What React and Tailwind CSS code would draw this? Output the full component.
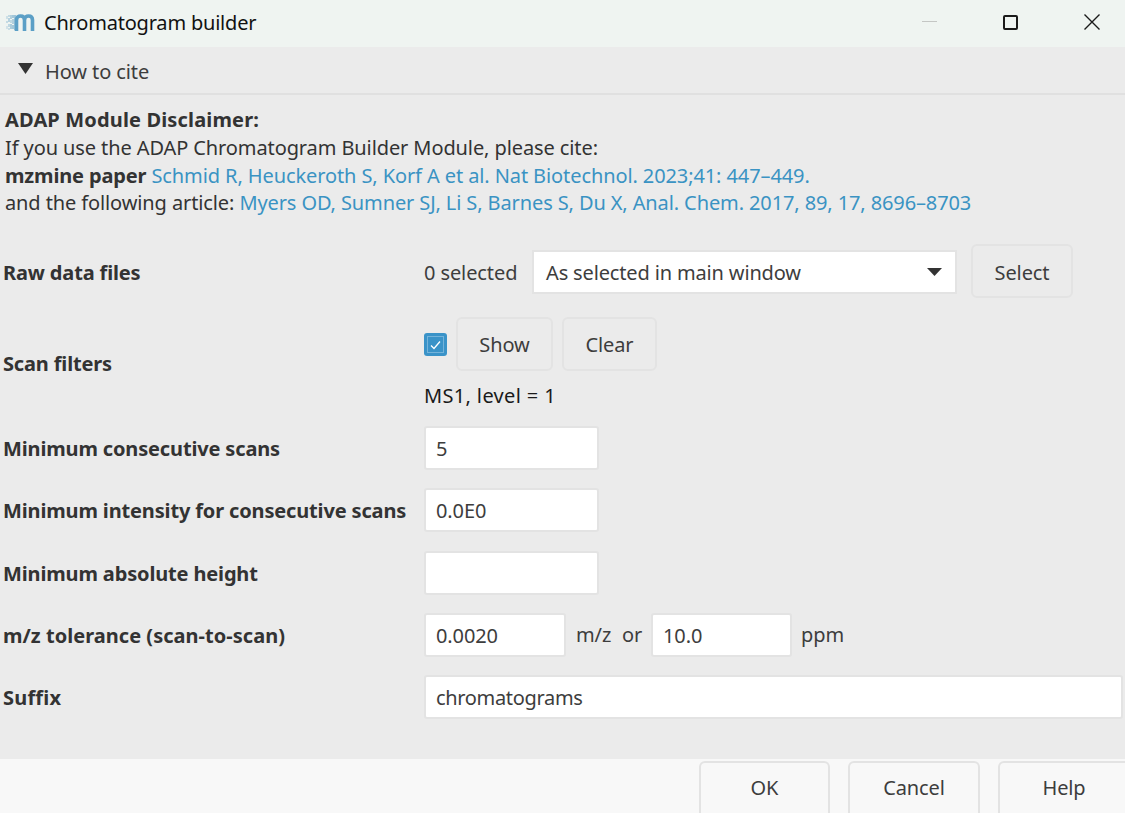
function Btn({ children, className }) {
  return (
    <div className={`flex items-center justify-center shrink-0 border-2 border-[#e3e3e3] rounded-[6px] text-[#3d3d3d] ${className}`}>
      {children}
    </div>
  );
}

function Field({ children, className }) {
  return (
    <div className={`flex items-center shrink-0 pl-[10px] pt-[2px] bg-white border-2 border-[#e3e3e3] rounded-[3px] text-[#3d3d3d] ${className}`}>
      {children}
    </div>
  );
}

function Row({ label, h, labelClass, children }) {
  return (
    <div className={`flex items-center ${h}`}>
      <div className={`w-[424px] pl-[3px] translate-y-px font-bold text-[#333333] shrink-0 whitespace-nowrap ${labelClass || "tracking-[-0.15px]"}`}>{label}</div>
      <div className="flex-1 flex items-center min-w-0">{children}</div>
    </div>
  );
}

const grain = [
  [6, 15, 2, 3, .35], [6, 20, 2, 2, .45], [6, 25, 2, 3, .3],
  [8, 14, 2, 2, .45], [8, 17, 2, 4, .6], [8, 23, 2, 3, .5], [8, 27, 2, 2, .4],
  [10, 14, 2, 4, .65], [10, 19, 2, 3, .5], [10, 23, 2, 5, .7],
  [12, 14, 2, 3, .8], [12, 18, 2, 5, .65], [12, 24, 2, 4, .8], [14, 14, 2, 15, .85],
];

export default function App() {
  return (
    <div className="w-[1125px] h-[813px] overflow-hidden bg-[#ebebeb] flex flex-col text-[20px] leading-[26px] tracking-[-0.1px]" style={{ fontFamily: '"Noto Sans","Open Sans",sans-serif' }}>
      <div className="h-[47px] bg-[#eff4f1] flex items-center shrink-0 pb-[1px]">
        <svg width="29" height="18" viewBox="6 13 29 18" className="ml-[6px] mr-[9px]">
          <g fill="#8fbbd3">
            {grain.map(([x, y, w, h, o], i) => (
              <rect key={i} x={x} y={y} width={w} height={h} opacity={o} />
            ))}
          </g>
          <path d="M16.5 30V19C16.5 16 18.5 15 20.5 15s4 1 4 4V30M24.5 19C24.5 16 26.5 15 28.5 15s4 1 4 4V30" fill="none" stroke="#5b9fc6" strokeWidth="3.6" />
        </svg>
        <span className="text-[#111111] tracking-[-0.2px]">Chromatogram builder</span>
        <div className="ml-auto flex items-center -translate-y-px">
          <div className="w-[15px] h-px bg-[#c4c6c4] mr-[66px] -translate-y-px" />
          <div className="w-[15px] h-[15px] border-2 border-[#1a1a1a] rounded-[2px] mr-[66px]" />
          <svg width="16" height="16" viewBox="0 0 16 16" className="mr-[25px]">
            <path d="M0.5 0.5L15.5 15.5M15.5 0.5L0.5 15.5" stroke="#1a1a1a" strokeWidth="1.4" />
          </svg>
        </div>
      </div>

      <div className="h-[48px] border-b-2 border-[#e0e0e0] flex items-center shrink-0 pl-[18px] pt-[3px] text-[#3d3d3d]">
        <svg width="15" height="11" viewBox="0 0 15 11" className="mr-[13px] -mt-[6px]">
          <path d="M0 0H15L7.5 11Z" fill="#333333" />
        </svg>
        <span className="-ml-px">How to cite</span>
      </div>

      <div className="pl-[5px] pt-[11px] h-[147px] shrink-0 text-[#333333] leading-[27.8px] whitespace-nowrap">
        <div className="font-bold tracking-[0.15px]">ADAP Module Disclaimer:</div>
        <div>If you use the ADAP Chromatogram Builder Module, please cite:</div>
        <div><span className="font-bold tracking-[-0.15px]">mzmine paper</span> <span className="text-[#3a93c3]">Schmid R, Heuckeroth S, Korf A et al. Nat Biotechnol. 2023;41: 447–449.</span></div>
        <div className="tracking-[-0.11px]">and the following article: <span className="text-[#3a93c3]">Myers OD, Sumner SJ, Li S, Barnes S, Du X, Anal. Chem. 2017, 89, 17, 8696–8703</span></div>
      </div>

      <div className="flex-1 flex flex-col">
        <Row label="Raw data files" h="h-[54px] mt-[3px]">
          <span className="text-[#3d3d3d] w-[108px] shrink-0 whitespace-nowrap translate-y-px">0 selected</span>
          <div className="w-[425px] h-[44px] shrink-0 bg-white border-2 border-[#e3e3e3] flex items-center pl-[12px] pr-[13px] text-[#3d3d3d]">
            <span className="translate-y-px tracking-[-0.15px]">As selected in main window</span>
            <svg width="15" height="8" viewBox="0 0 15 8" className="ml-auto"><path d="M0 0H15L7.5 8Z" fill="#333333" /></svg>
          </div>
          <Btn className="w-[102px] h-[54px] ml-[14px] -translate-y-px pt-[4px]">Select</Btn>
        </Row>

        <Row label="Scan filters" h="h-[110px] mt-[9px]">
          <div className="flex flex-col">
            <div className="flex items-center">
              <div className="w-[23px] h-[23px] rounded-[3px] bg-[#3a93c8] flex items-center justify-center">
                <div className="w-[17px] h-[17px] border border-[#74b3da] flex items-center justify-center">
                  <svg width="11" height="10" viewBox="0 0 11 10"><path d="M1 5.5L4 8.5L10 1.5" fill="none" stroke="#ffffff" strokeWidth="1.3" /></svg>
                </div>
              </div>
              <Btn className="w-[97px] h-[54px] ml-[9px] -translate-y-px pt-[2px]">Show</Btn>
              <Btn className="w-[95px] h-[54px] ml-[9px] -translate-y-px pt-[2px]">Clear</Btn>
            </div>
            <div className="text-[#1a1a1a] mt-[11px] tracking-[0.35px]">MS1, level = 1</div>
          </div>
        </Row>

        <Row label="Minimum consecutive scans" h="h-[44px] mt-[8px]">
          <Field className="w-[175px] h-[44px]">5</Field>
        </Row>
        <Row label="Minimum intensity for consecutive scans" h="h-[44px] mt-[18px]">
          <Field className="w-[175px] h-[44px]">0.0E0</Field>
        </Row>
        <Row label="Minimum absolute height" h="h-[44px] mt-[19px]">
          <Field className="w-[175px] h-[44px]" />
        </Row>
        <Row label="m/z tolerance (scan-to-scan)" labelClass="tracking-[0.03px]" h="h-[44px] mt-[18px]">
          <Field className="w-[142px] h-[44px]">0.0020</Field>
          <span className="ml-[10px] text-[#3d3d3d] w-[36px] shrink-0">m/z</span>
          <span className="ml-[10px] text-[#3d3d3d] w-[20px] shrink-0">or</span>
          <Field className="w-[141px] h-[44px] ml-[9px]">10.0</Field>
          <span className="ml-[9px] text-[#3d3d3d]">ppm</span>
        </Row>
        <Row label="Suffix" labelClass="tracking-[0.2px]" h="h-[44px] mt-[18px]">
          <Field className="w-[699px] h-[44px] tracking-[-0.33px]">chromatograms</Field>
        </Row>
      </div>

      <div className="h-[54px] bg-[#f8f8f8] shrink-0 flex pt-[2px] overflow-hidden">
        <Btn className="w-[131px] h-[60px] ml-[699px] pb-[7px]">OK</Btn>
        <Btn className="w-[132px] h-[60px] ml-[18px] pb-[7px]">Cancel</Btn>
        <Btn className="w-[132px] h-[60px] ml-[18px] pb-[7px]">Help</Btn>
      </div>
    </div>
  );
}
